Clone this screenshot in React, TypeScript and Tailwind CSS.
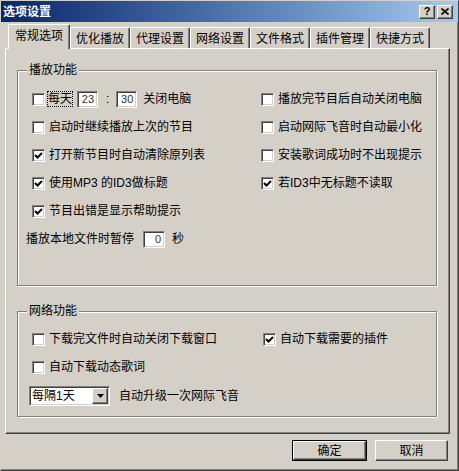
import React from 'react';

const raised =
  'border border-t-white border-l-white border-r-[#404040] border-b-[#404040] shadow-[inset_-1px_-1px_0_#808080]';
const sunken =
  'bg-white border border-t-[#808080] border-l-[#808080] border-r-white border-b-white shadow-[inset_1px_1px_0_#404040,inset_-1px_-1px_0_#d4d0c8]';

const CheckBox = ({ checked }: { checked?: boolean }) => (
  <span className={`relative inline-block w-[13px] h-[13px] shrink-0 ${sunken}`}>
    {checked && (
      <svg className="absolute left-0 top-0" width="11" height="11" viewBox="0 0 11 11">
        <polyline points="2,5 4.5,7.5 9,3" fill="none" stroke="#000" strokeWidth="2" />
      </svg>
    )}
  </span>
);

const CheckRow = ({ label, checked }: { label: string; checked?: boolean }) => (
  <div className="flex items-center">
    <CheckBox checked={checked} />
    <span className="ml-[4px] whitespace-nowrap">{label}</span>
  </div>
);

const NumBox = ({ value, className }: { value: string; className: string }) => (
  <span
    className={`${sunken} ${className} h-[17px] flex items-center justify-end pr-[3px] font-['Liberation_Sans',sans-serif] text-[11px] text-[#333]`}
  >
    {value}
  </span>
);

const tabs = ['优化播放', '代理设置', '网络设置', '文件格式', '插件管理', '快捷方式'];

export default function App() {
  return (
    <div className="w-[459px] h-[471px] overflow-hidden bg-[#d4d0c8] flex flex-col border border-t-[#d4d0c8] border-l-[#d4d0c8] border-r-[#404040] border-b-[#404040] shadow-[inset_-1px_-1px_0_#808080] font-['Liberation_Sans','Noto_Sans_CJK_SC',sans-serif] text-[12px] leading-[14px] text-black">
      {/* title bar */}
      <div className="h-[21px] shrink-0 flex items-center justify-between bg-linear-to-r from-[#0a246a] to-[#a6caf0] pl-[2px] pr-[5px]">
        <span className="text-white font-bold text-[12px]">选项设置</span>
        <div className="flex gap-[2px]">
          <span className={`w-[16px] h-[14px] bg-[#d4d0c8] flex items-center justify-center text-[11px] font-bold leading-none ${raised}`}>
            ?
          </span>
          <span className={`w-[16px] h-[14px] bg-[#d4d0c8] flex items-center justify-center ${raised}`}>
            <svg width="8" height="7" viewBox="0 0 8 7">
              <path d="M0.5 0.5 L7.5 6.5 M7.5 0.5 L0.5 6.5" stroke="#000" strokeWidth="1.6" />
            </svg>
          </span>
        </div>
      </div>

      {/* tabs */}
      <div className="h-[26px] shrink-0 flex items-end pl-[7px]">
        <div className="relative z-10 -mb-[1px] w-[62px] h-[25px] bg-[#d4d0c8] flex items-center justify-center pb-[3px] rounded-t-[2px] border-t border-l border-r border-t-white border-l-white border-r-[#404040] shadow-[inset_-1px_0_0_#808080]">
          常规选项
        </div>
        {tabs.map((t) => (
          <div
            key={t}
            className="w-[60px] h-[21px] flex items-center justify-center pt-[1px] rounded-t-[2px] border-t border-l border-r border-t-white border-l-white border-r-[#404040] shadow-[inset_-1px_0_0_#808080]"
          >
            {t}
          </div>
        ))}
      </div>

      {/* panel */}
      <div className="ml-[4px] w-[445px] h-[386px] shrink-0 flex flex-col border border-t-white border-l-white border-r-[#404040] border-b-[#404040] shadow-[inset_-1px_-1px_0_#808080]">
        {/* group 1 */}
        <div className="relative ml-[11px] mt-[21px] w-[420px] h-[216px] border border-[#808080] shadow-[1px_1px_0_#fff,inset_1px_1px_0_#fff]">
          <span className="absolute left-[9px] top-[-8px] px-[2px] bg-[#d4d0c8]">播放功能</span>
          <div className="flex pt-[14px] pl-[14px]">
            <div className="w-[229px] flex flex-col">
              <div className="h-[28px] flex items-center">
                <CheckBox />
                <span className="ml-[3px] outline outline-1 outline-dotted outline-black">每天</span>
                <NumBox value="23" className="ml-[5px] w-[21px]" />
                <span className="ml-[8px] mr-[7px]">:</span>
                <NumBox value="30" className="w-[21px]" />
                <span className="ml-[6px]">关闭电脑</span>
              </div>
              <div className="h-[28px] flex items-center">
                <CheckRow label="启动时继续播放上次的节目" />
              </div>
              <div className="h-[28px] flex items-center">
                <CheckRow checked label="打开新节目时自动清除原列表" />
              </div>
              <div className="h-[28px] flex items-center">
                <CheckRow checked label="使用MP3 的ID3做标题" />
              </div>
              <div className="h-[28px] flex items-center">
                <CheckRow checked label="节目出错是显示帮助提示" />
              </div>
              <div className="h-[28px] flex items-center -ml-[6px] whitespace-nowrap">
                <span>播放本地文件时暂停</span>
                <NumBox value="0" className="ml-[9px] w-[22px]" />
                <span className="ml-[7px]">秒</span>
              </div>
            </div>
            <div className="flex flex-col">
              <div className="h-[28px] flex items-center">
                <CheckRow label="播放完节目后自动关闭电脑" />
              </div>
              <div className="h-[28px] flex items-center">
                <CheckRow label="启动网际飞音时自动最小化" />
              </div>
              <div className="h-[28px] flex items-center">
                <CheckRow label="安装歌词成功时不出现提示" />
              </div>
              <div className="h-[28px] flex items-center">
                <CheckRow checked label="若ID3中无标题不读取" />
              </div>
            </div>
          </div>
        </div>

        {/* group 2 */}
        <div className="relative ml-[11px] mt-[25px] w-[420px] h-[106px] border border-[#808080] shadow-[1px_1px_0_#fff,inset_1px_1px_0_#fff]">
          <span className="absolute left-[9px] top-[-8px] px-[2px] bg-[#d4d0c8]">网络功能</span>
          <div className="flex flex-col pt-[13px] pl-[14px]">
            <div className="h-[28px] flex items-center">
              <div className="w-[231px]">
                <CheckRow label="下载完文件时自动关闭下载窗口" />
              </div>
              <CheckRow checked label="自动下载需要的插件" />
            </div>
            <div className="h-[28px] flex items-center">
              <CheckRow label="自动下载动态歌词" />
            </div>
            <div className="h-[28px] mt-[1px] flex items-center -ml-[3px]">
              <div className={`w-[81px] h-[20px] flex items-center justify-between pl-[2px] pr-[1px] ${sunken}`}>
                <span>每隔1天</span>
                <span className={`w-[16px] h-[16px] bg-[#d4d0c8] flex items-center justify-center ${raised}`}>
                  <svg width="7" height="4" viewBox="0 0 7 4">
                    <path d="M0 0 H7 L3.5 4 Z" fill="#000" />
                  </svg>
                </span>
              </div>
              <span className="ml-[9px] whitespace-nowrap">自动升级一次网际飞音</span>
            </div>
          </div>
        </div>
      </div>

      {/* buttons */}
      <div className="mt-[6px] flex justify-end gap-[8px] pr-[10px]">
        <div className="w-[75px] h-[21px] border border-black">
          <div className={`w-full h-full bg-[#d4d0c8] flex items-center justify-center ${raised}`}>确定</div>
        </div>
        <div className={`w-[73px] h-[21px] bg-[#d4d0c8] flex items-center justify-center ${raised}`}>取消</div>
      </div>
    </div>
  );
}
